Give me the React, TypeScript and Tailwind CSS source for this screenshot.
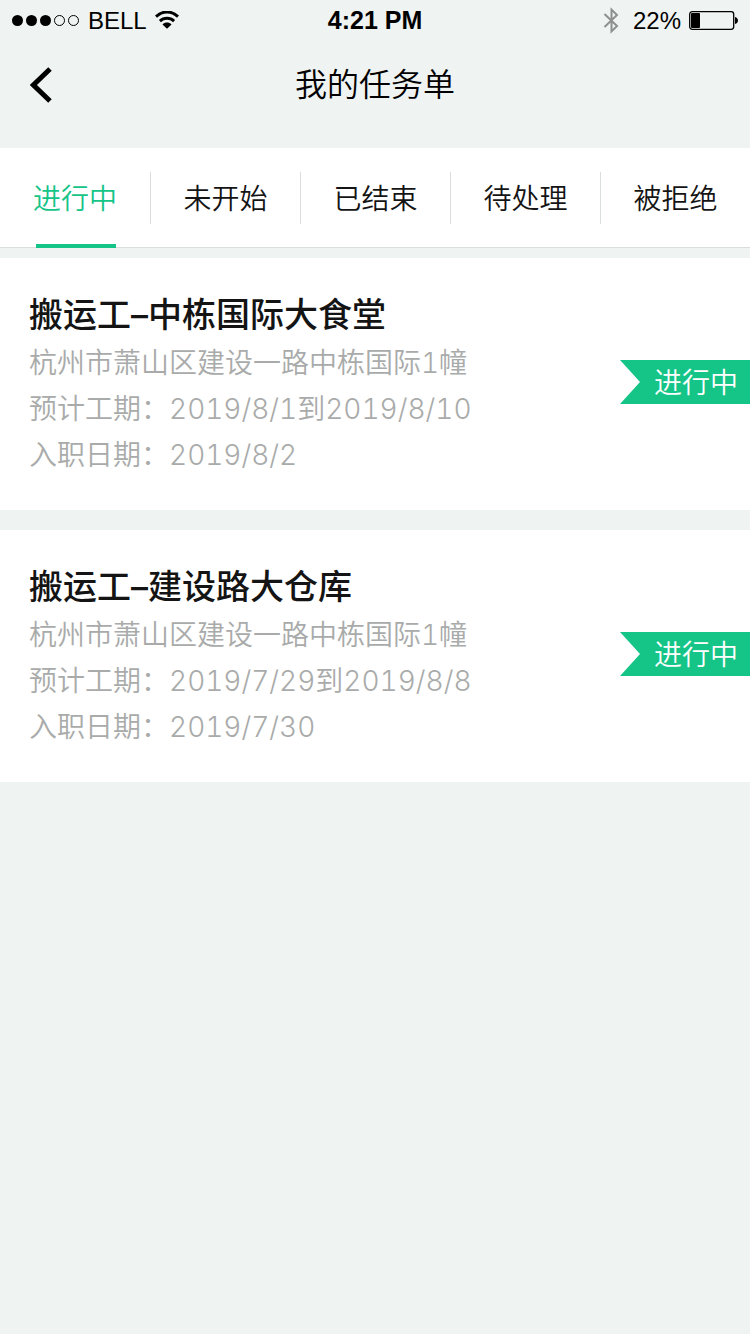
import React, { useState } from 'react';
import clsx from 'clsx';

interface Task {
  id: number;
  title: string;
  address: string;
  period: string;
  startDate: string;
  status: string;
}

const tabs = ['进行中', '未开始', '已结束', '待处理', '被拒绝'];

const tasks: Task[] = [
  {
    id: 1,
    title: '搬运工–中栋国际大食堂',
    address: '杭州市萧山区建设一路中栋国际1幢',
    period: '2019/8/1到2019/8/10',
    startDate: '2019/8/2',
    status: '进行中',
  },
  {
    id: 2,
    title: '搬运工–建设路大仓库',
    address: '杭州市萧山区建设一路中栋国际1幢',
    period: '2019/7/29到2019/8/8',
    startDate: '2019/7/30',
    status: '进行中',
  },
];

const StatusBar: React.FC = () => (
  <div className="grid h-10 grid-cols-3 items-center px-3 font-['Liberation_Sans',sans-serif] text-2xl text-black">
    <div className="flex items-center gap-2">
      <svg width="68" height="12" viewBox="0 0 68 12" aria-hidden="true">
        <circle cx="5.5" cy="6.5" r="5.5" />
        <circle cx="19.5" cy="6.5" r="5.5" />
        <circle cx="33.5" cy="6.5" r="5.5" />
        <circle cx="47.5" cy="6.5" r="5" fill="none" stroke="currentColor" />
        <circle cx="61.5" cy="6.5" r="5" fill="none" stroke="currentColor" />
      </svg>
      <span className="pt-0.5">BELL</span>
      <svg width="24" height="18" viewBox="0 0 24 18" fill="none" stroke="currentColor" aria-hidden="true">
        <path d="M1 5.6C7.4-.6 16.6-.6 23 5.6" strokeWidth="2.9" />
        <path d="M4.9 10.1C9 6.3 15 6.3 19.1 10.1" strokeWidth="2.9" />
        <path d="M7.5 13.4C10 10.8 14 10.8 16.5 13.4L12 17.8Z" fill="currentColor" stroke="none" />
      </svg>
    </div>
    <span className="pt-0.5 text-center text-[25px] font-bold">4:21 PM</span>
    <div className="flex items-center justify-end gap-2">
      <div className="flex items-center gap-3">
        <svg width="18" height="28" viewBox="0 0 18 28" fill="none" stroke="#8e9090" strokeWidth="2" aria-hidden="true">
          <path d="M1.5 8L14 20L8.5 25.4V3.6L14 9L1.5 21" />
        </svg>
        <span className="pt-0.5">22%</span>
      </div>
      <svg width="49" height="19" viewBox="0 0 49 19" fill="none" aria-hidden="true">
        <rect x=".7" y=".7" width="44" height="17.6" rx="2.5" stroke="currentColor" strokeWidth="1.3" />
        <rect x="2" y="2" width="9" height="15" rx="1" fill="currentColor" />
        <path d="M46 6C48 6.5 49 8 49 9.5C49 11 48 12.5 46 13Z" fill="currentColor" />
      </svg>
    </div>
  </div>
);

const Header: React.FC = () => (
  <header className="grid h-[108px] grid-cols-[1fr_auto_1fr] items-start px-[30px] pt-5">
    <button type="button" aria-label="返回" className="flex h-[50px] items-center justify-self-start">
      <svg width="22" height="36" viewBox="0 0 22 36" fill="none" stroke="#000" strokeWidth="5">
        <path d="M20 2L3.4 18L20 34" />
      </svg>
    </button>
    <h1 className="text-[32px] leading-[50px] font-[350] text-black">我的任务单</h1>
  </header>
);

const TaskCard: React.FC<{ task: Task }> = ({ task }) => (
  <li className="flex items-center justify-between bg-white">
    <div className="px-[29px] pt-8 pb-8 text-[28px] leading-[46px] font-[350] text-[#a9abaa] tabular-nums">
      <h2 className="text-[34px] leading-[50px] font-medium text-[#141414]">{task.title}</h2>
      <p>{task.address}</p>
      <p>预计工期：{task.period}</p>
      <p>入职日期：{task.startDate}</p>
    </div>
    <div className="pb-1">
      <div className="h-11 w-[130px] bg-[#15c487] pr-3 text-right text-[28px] leading-[46px] font-[350] text-white [clip-path:polygon(0_0,100%_0,100%_100%,0_100%,20px_50%)]">
        {task.status}
      </div>
    </div>
  </li>
);

const App: React.FC = () => {
  const [active, setActive] = useState(0);

  return (
    <div className="min-h-screen bg-[#eff3f2] font-['Inter','Noto_Sans_CJK_SC',sans-serif]">
      <StatusBar />
      <Header />

      <nav className="flex h-[100px] items-stretch border-b border-[#dadddd] bg-white">
        {tabs.map((tab, i) => (
          <button
            key={tab}
            type="button"
            onClick={() => setActive(i)}
            className={clsx(
              'relative flex flex-1 items-center text-[28px] font-[350]',
              active === i ? 'text-[#15c487]' : 'text-[#141414]'
            )}
          >
            <span className={clsx('h-[52px] flex-1 leading-[54px]', i > 0 && 'border-l border-[#dadddd]')}>{tab}</span>
            {active === i && <span className="absolute -bottom-px left-9 h-1 w-20 bg-[#15c487]" />}
          </button>
        ))}
      </nav>

      <ul className="mt-[10px] flex flex-col gap-5">
        {tasks.map((task) => (
          <TaskCard key={task.id} task={task} />
        ))}
      </ul>
    </div>
  );
};

export default App;
